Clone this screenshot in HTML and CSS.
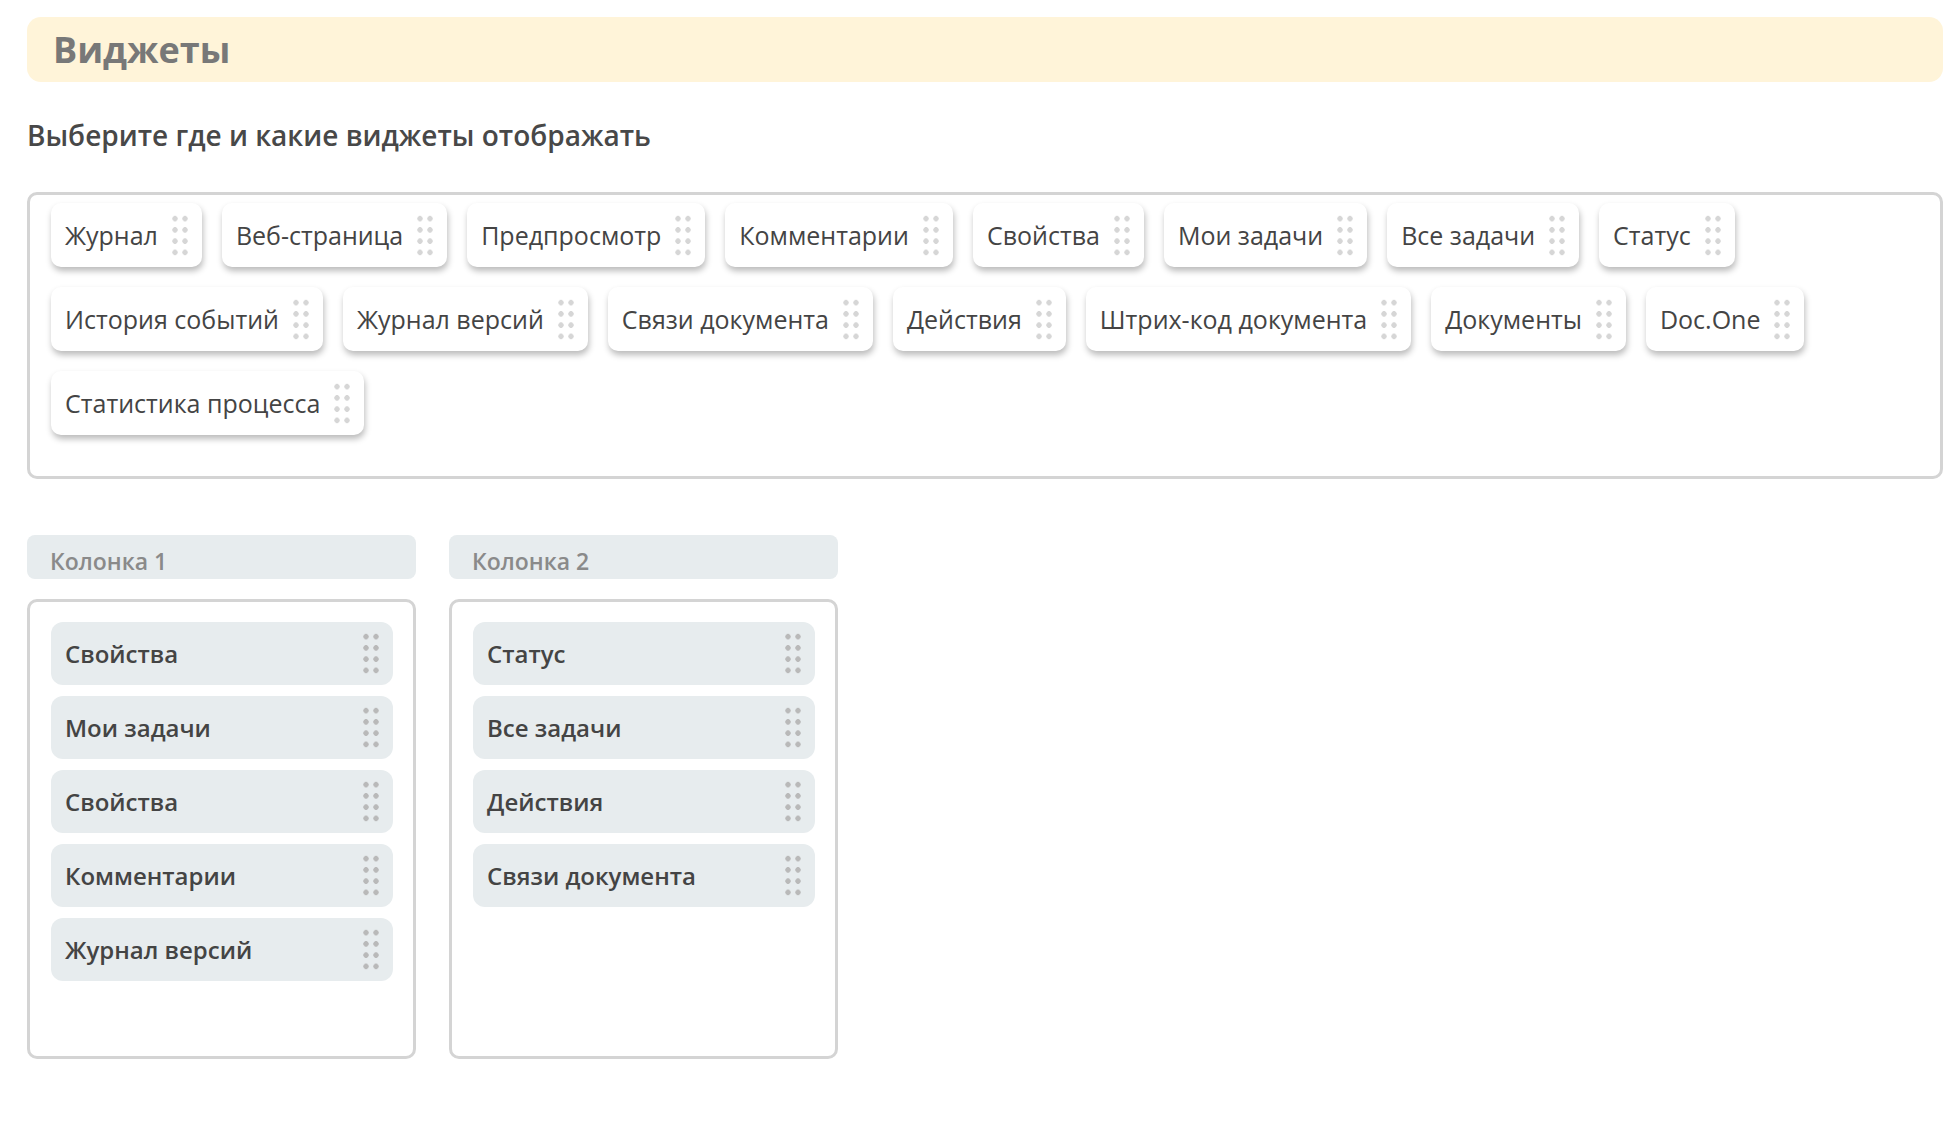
FILE: index.html
```html
<!DOCTYPE html>
<html lang="ru">
    <head>
        <meta charset="utf-8">
        <title>Виджеты</title>
        <link rel="stylesheet" href="styles.css">
    </head>
    <body>
        <div class="page">
            <h1 class="banner">Виджеты</h1>

            <p class="hint">Выберите где и какие виджеты отображать</p>

            <div class="palette">
                <div class="tag"><span class="tag-name">Журнал</span><span class="handle"></span></div>
                <div class="tag"><span class="tag-name">Веб-страница</span><span class="handle"></span></div>
                <div class="tag"><span class="tag-name">Предпросмотр</span><span class="handle"></span></div>
                <div class="tag"><span class="tag-name">Комментарии</span><span class="handle"></span></div>
                <div class="tag"><span class="tag-name">Свойства</span><span class="handle"></span></div>
                <div class="tag"><span class="tag-name">Мои задачи</span><span class="handle"></span></div>
                <div class="tag"><span class="tag-name">Все задачи</span><span class="handle"></span></div>
                <div class="tag"><span class="tag-name">Статус</span><span class="handle"></span></div>
                <div class="tag"><span class="tag-name">История событий</span><span class="handle"></span></div>
                <div class="tag"><span class="tag-name">Журнал версий</span><span class="handle"></span></div>
                <div class="tag"><span class="tag-name">Связи документа</span><span class="handle"></span></div>
                <div class="tag"><span class="tag-name">Действия</span><span class="handle"></span></div>
                <div class="tag"><span class="tag-name">Штрих-код документа</span><span class="handle"></span></div>
                <div class="tag"><span class="tag-name">Документы</span><span class="handle"></span></div>
                <div class="tag"><span class="tag-name">Doc.One</span><span class="handle"></span></div>
                <div class="tag"><span class="tag-name">Статистика процесса</span><span class="handle"></span></div>
            </div>

            <div class="columns">
                <div class="column">
                    <div class="column-head">Колонка 1</div>
                    <div class="column-body">
                        <div class="item"><span>Свойства</span><span class="handle dark"></span></div>
                        <div class="item"><span>Мои задачи</span><span class="handle dark"></span></div>
                        <div class="item"><span>Свойства</span><span class="handle dark"></span></div>
                        <div class="item"><span>Комментарии</span><span class="handle dark"></span></div>
                        <div class="item"><span>Журнал версий</span><span class="handle dark"></span></div>
                    </div>
                </div>

                <div class="column">
                    <div class="column-head">Колонка 2</div>
                    <div class="column-body">
                        <div class="item"><span>Статус</span><span class="handle dark"></span></div>
                        <div class="item"><span>Все задачи</span><span class="handle dark"></span></div>
                        <div class="item"><span>Действия</span><span class="handle dark"></span></div>
                        <div class="item"><span>Связи документа</span><span class="handle dark"></span></div>
                    </div>
                </div>
            </div>
        </div>
    </body>
</html>
```

FILE: styles.css
```css
* {
    box-sizing: border-box;
    margin: 0;
    padding: 0;
}

body {
    font-family: 'Open Sans', 'Noto Sans', sans-serif;
    color: #444;
    background: #fff;
}

.page {
    padding: 17px 11px 40px 27px;
}

.banner {
    height: 65px;
    display: flex;
    align-items: center;
    padding-left: 26px;
    background: #fff4d9;
    border-radius: 14px;
    font-size: 36px;
    font-weight: 700;
    color: #787878;
}

.hint {
    margin-top: 35px;
    font-size: 28px;
    font-weight: 600;
    line-height: 36px;
    color: #484848;
}

.palette {
    margin-top: 39px;
    display: flex;
    flex-wrap: wrap;
    align-content: flex-start;
    gap: 20px 20px;
    min-height: 287px;
    padding: 8px 21px 38px;
    border: 3px solid #d4d4d4;
    border-radius: 10px;
}

.tag {
    display: flex;
    align-items: center;
    height: 64px;
    padding: 0 12px 0 14px;
    background: #fff;
    border-radius: 10px;
    box-shadow: 1px 4px 6px rgba(0, 0, 0, 0.27);
    font-size: 25px;
    color: #444;
}

.tag-name {
    margin-right: 12px;
}

/* drag handle: 2 x 4 dots */
.handle {
    flex: none;
    width: 20px;
    height: 45px;
    background-image: radial-gradient(circle, #d6d6d6 2.4px, transparent 3px);
    background-size: 10px 11.25px;
}

.handle.dark {
    background-image: radial-gradient(circle, #b9b9b9 2.4px, transparent 3px);
}

.columns {
    margin-top: 56px;
    display: flex;
    gap: 33px;
}

.column {
    width: 389px;
}

.column-head {
    height: 44px;
    padding: 8px 0 0 23px;
    background: #e7ecee;
    border-radius: 8px;
    font-size: 23px;
    font-weight: 600;
    line-height: 36px;
    color: #8a8a8a;
}

.column-body {
    margin-top: 20px;
    height: 460px;
    display: flex;
    flex-direction: column;
    gap: 11px;
    padding: 20px 20px 0 21px;
    border: 3px solid #d4d4d4;
    border-radius: 10px;
}

.item {
    display: flex;
    align-items: center;
    justify-content: space-between;
    height: 63px;
    padding: 0 12px 0 14px;
    background: #e7ecee;
    border-radius: 12px;
    font-size: 24px;
    font-weight: 600;
    color: #444;
}
```
